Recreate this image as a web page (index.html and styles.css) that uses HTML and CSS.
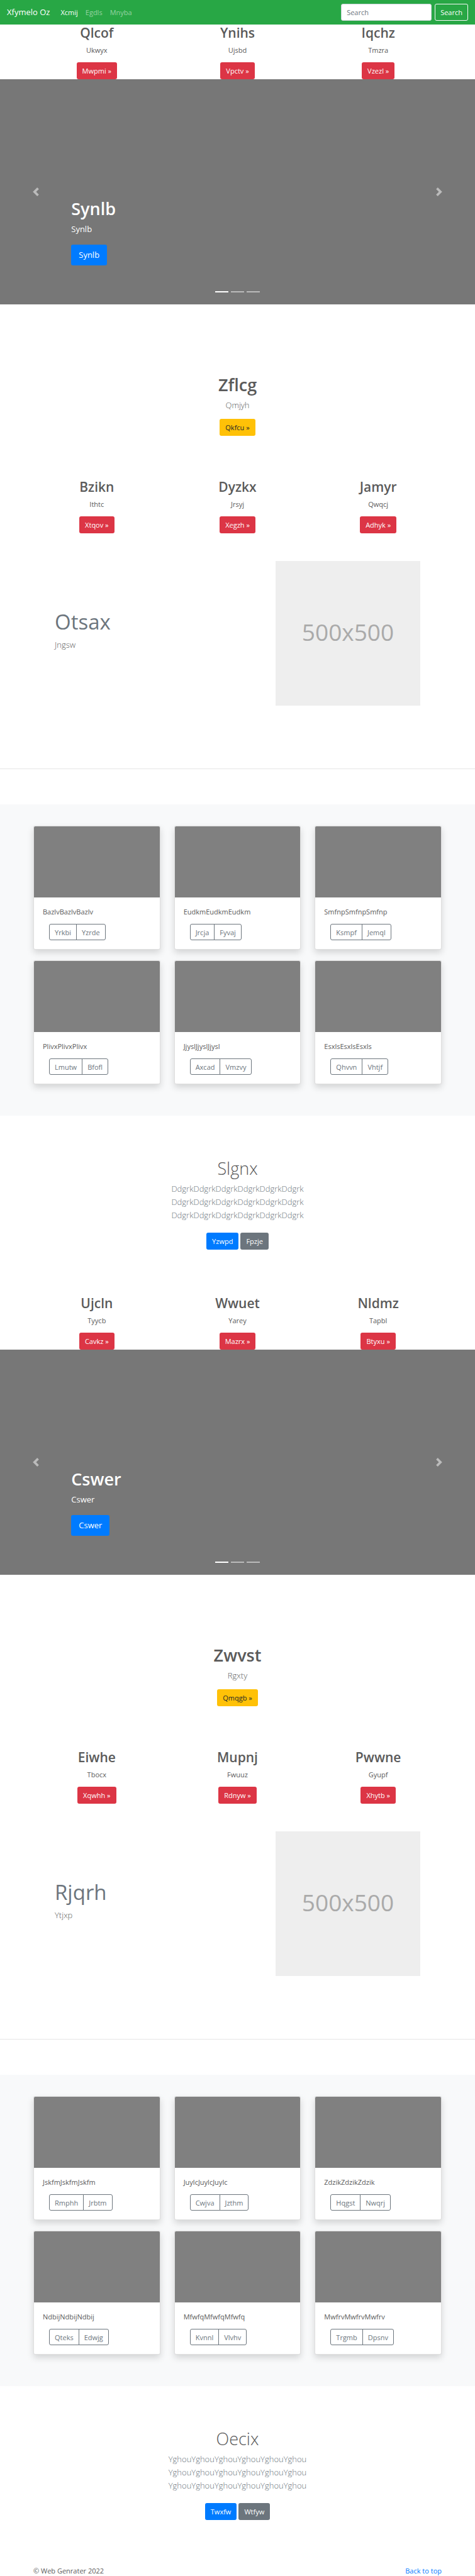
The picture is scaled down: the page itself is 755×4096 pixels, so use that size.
FILE: index.html
```html
<!DOCTYPE html>
<html lang="en">
<head>
<meta charset="utf-8">
<meta name="viewport" content="width=device-width, initial-scale=1">
<title>Xfymelo Oz</title>
<link rel="stylesheet" href="styles.css">
</head>
<body>
<header class="navbar" id="top">
  <a class="brand" href="#">Xfymelo Oz</a>
  <nav class="nav">
    <a class="nav-link active" href="#">Xcmij</a>
    <a class="nav-link" href="#">Egdls</a>
    <a class="nav-link" href="#">Mnyba</a>
  </nav>
  <form class="search">
    <input class="search-input" type="search" placeholder="Search" aria-label="Search">
    <button class="btn btn-outline-light" type="button">Search</button>
  </form>
</header>

<main>
  <section class="container columns">
    <div class="column"><h2>Qlcof</h2><p>Ukwyx</p><a class="btn btn-danger" href="#">Mwpmi »</a></div>
    <div class="column"><h2>Ynihs</h2><p>Ujsbd</p><a class="btn btn-danger" href="#">Vpctv »</a></div>
    <div class="column"><h2>Iqchz</h2><p>Tmzra</p><a class="btn btn-danger" href="#">Vzezl »</a></div>
  </section>

  <section class="carousel">
    <div class="caption"><h1>Synlb</h1><p>Synlb</p><a class="btn btn-primary btn-lg" href="#">Synlb</a></div>
    <button class="control prev" type="button" aria-label="Previous"><svg viewBox="0 0 8 8"><path d="M5.25 0l-4 4 4 4 1.5-1.5-2.5-2.5 2.5-2.5-1.5-1.5z"/></svg></button>
    <button class="control next" type="button" aria-label="Next"><svg viewBox="0 0 8 8"><path d="M2.75 0l-1.5 1.5 2.5 2.5-2.5 2.5 1.5 1.5 4-4-4-4z"/></svg></button>
    <div class="indicators"><span class="indicator current"></span><span class="indicator"></span><span class="indicator"></span></div>
  </section>

  <section class="container intro">
    <h1>Zflcg</h1><p class="lead">Qmjyh</p><a class="btn btn-warning" href="#">Qkfcu »</a>
  </section>

  <section class="container columns">
    <div class="column"><h2>Bzikn</h2><p>Ithtc</p><a class="btn btn-danger" href="#">Xtqov »</a></div>
    <div class="column"><h2>Dyzkx</h2><p>Jrsyj</p><a class="btn btn-danger" href="#">Xegzh »</a></div>
    <div class="column"><h2>Jamyr</h2><p>Qwqcj</p><a class="btn btn-danger" href="#">Adhyk »</a></div>
  </section>

  <section class="container featurette">
    <div class="feature-text"><h2>Otsax</h2><p class="lead">Jngsw</p></div>
    <div class="placeholder">500x500</div>
  </section>
  <hr class="divider">

  <section class="album">
    <div class="container cards">
      <article class="card"><div class="thumb"></div><div class="card-body"><p>BazlvBazlvBazlv</p><div class="btn-group"><button class="btn btn-outline" type="button">Yrkbi</button><button class="btn btn-outline" type="button">Yzrde</button></div></div></article>
      <article class="card"><div class="thumb"></div><div class="card-body"><p>EudkmEudkmEudkm</p><div class="btn-group"><button class="btn btn-outline" type="button">Jrcja</button><button class="btn btn-outline" type="button">Fyvaj</button></div></div></article>
      <article class="card"><div class="thumb"></div><div class="card-body"><p>SmfnpSmfnpSmfnp</p><div class="btn-group"><button class="btn btn-outline" type="button">Ksmpf</button><button class="btn btn-outline" type="button">Jemql</button></div></div></article>
      <article class="card"><div class="thumb"></div><div class="card-body"><p>PlivxPlivxPlivx</p><div class="btn-group"><button class="btn btn-outline" type="button">Lmutw</button><button class="btn btn-outline" type="button">Bfofl</button></div></div></article>
      <article class="card"><div class="thumb"></div><div class="card-body"><p>JjyslJjyslJjysl</p><div class="btn-group"><button class="btn btn-outline" type="button">Axcad</button><button class="btn btn-outline" type="button">Vmzvy</button></div></div></article>
      <article class="card"><div class="thumb"></div><div class="card-body"><p>EsxlsEsxlsEsxls</p><div class="btn-group"><button class="btn btn-outline" type="button">Qhvvn</button><button class="btn btn-outline" type="button">Vhtjf</button></div></div></article>
    </div>
  </section>

  <section class="container jumbotron">
    <h1>Slgnx</h1>
    <p class="lead">DdgrkDdgrkDdgrkDdgrkDdgrkDdgrk<br>DdgrkDdgrkDdgrkDdgrkDdgrkDdgrk<br>DdgrkDdgrkDdgrkDdgrkDdgrkDdgrk</p>
    <div class="actions"><a class="btn btn-primary" href="#">Yzwpd</a><a class="btn btn-secondary" href="#">Fpzje</a></div>
  </section>

  <section class="container columns">
    <div class="column"><h2>Ujcln</h2><p>Tyycb</p><a class="btn btn-danger" href="#">Cavkz »</a></div>
    <div class="column"><h2>Wwuet</h2><p>Yarey</p><a class="btn btn-danger" href="#">Mazrx »</a></div>
    <div class="column"><h2>Nldmz</h2><p>Tapbl</p><a class="btn btn-danger" href="#">Btyxu »</a></div>
  </section>

  <section class="carousel">
    <div class="caption"><h1>Cswer</h1><p>Cswer</p><a class="btn btn-primary btn-lg" href="#">Cswer</a></div>
    <button class="control prev" type="button" aria-label="Previous"><svg viewBox="0 0 8 8"><path d="M5.25 0l-4 4 4 4 1.5-1.5-2.5-2.5 2.5-2.5-1.5-1.5z"/></svg></button>
    <button class="control next" type="button" aria-label="Next"><svg viewBox="0 0 8 8"><path d="M2.75 0l-1.5 1.5 2.5 2.5-2.5 2.5 1.5 1.5 4-4-4-4z"/></svg></button>
    <div class="indicators"><span class="indicator current"></span><span class="indicator"></span><span class="indicator"></span></div>
  </section>

  <section class="container intro">
    <h1>Zwvst</h1><p class="lead">Rgxty</p><a class="btn btn-warning" href="#">Qmqgb »</a>
  </section>

  <section class="container columns">
    <div class="column"><h2>Eiwhe</h2><p>Tbocx</p><a class="btn btn-danger" href="#">Xqwhh »</a></div>
    <div class="column"><h2>Mupnj</h2><p>Fwuuz</p><a class="btn btn-danger" href="#">Rdnyw »</a></div>
    <div class="column"><h2>Pwwne</h2><p>Gyupf</p><a class="btn btn-danger" href="#">Xhytb »</a></div>
  </section>

  <section class="container featurette">
    <div class="feature-text"><h2>Rjqrh</h2><p class="lead">Ytjxp</p></div>
    <div class="placeholder">500x500</div>
  </section>
  <hr class="divider">

  <section class="album">
    <div class="container cards">
      <article class="card"><div class="thumb"></div><div class="card-body"><p>JskfmJskfmJskfm</p><div class="btn-group"><button class="btn btn-outline" type="button">Rmphh</button><button class="btn btn-outline" type="button">Jrbtm</button></div></div></article>
      <article class="card"><div class="thumb"></div><div class="card-body"><p>JuylcJuylcJuylc</p><div class="btn-group"><button class="btn btn-outline" type="button">Cwjva</button><button class="btn btn-outline" type="button">Jzthm</button></div></div></article>
      <article class="card"><div class="thumb"></div><div class="card-body"><p>ZdzikZdzikZdzik</p><div class="btn-group"><button class="btn btn-outline" type="button">Hqgst</button><button class="btn btn-outline" type="button">Nwqrj</button></div></div></article>
      <article class="card"><div class="thumb"></div><div class="card-body"><p>NdbijNdbijNdbij</p><div class="btn-group"><button class="btn btn-outline" type="button">Qteks</button><button class="btn btn-outline" type="button">Edwjg</button></div></div></article>
      <article class="card"><div class="thumb"></div><div class="card-body"><p>MfwfqMfwfqMfwfq</p><div class="btn-group"><button class="btn btn-outline" type="button">Kvnnl</button><button class="btn btn-outline" type="button">Vlvhv</button></div></div></article>
      <article class="card"><div class="thumb"></div><div class="card-body"><p>MwfrvMwfrvMwfrv</p><div class="btn-group"><button class="btn btn-outline" type="button">Trgmb</button><button class="btn btn-outline" type="button">Dpsnv</button></div></div></article>
    </div>
  </section>

  <section class="container jumbotron">
    <h1>Oecix</h1>
    <p class="lead">YghouYghouYghouYghouYghouYghou<br>YghouYghouYghouYghouYghouYghou<br>YghouYghouYghouYghouYghouYghou</p>
    <div class="actions"><a class="btn btn-primary" href="#">Twxfw</a><a class="btn btn-secondary" href="#">Wtfyw</a></div>
  </section>
</main>

<footer class="container footer">
  <p>© Web Genrater 2022</p>
  <a href="#top">Back to top</a>
</footer>
</body>
</html>
```

FILE: styles.css
```css
* { box-sizing: border-box; }

body {
  margin: 0;
  background: #fff;
  color: #5a5a5a;
  font-family: "Open Sans", "Noto Sans", sans-serif;
  font-size: 11px;
  line-height: 17px;
}

h1, h2, p { margin: 0; }
a { color: #007bff; text-decoration: none; }

h1 { margin-bottom: 5px; font-size: 27px; line-height: 34px; font-weight: 600; }
h2 { margin-bottom: 5px; font-size: 21px; line-height: 27px; font-weight: 600; }
.lead { font-size: 13px; line-height: 21px; font-weight: 300; }

.container {
  width: 100%;
  max-width: 671px;
  margin: 0 auto;
  padding: 0 11px;
}

/* Buttons */
.btn {
  display: inline-block;
  height: 27px;
  padding: 4px 8px;
  border: 1px solid transparent;
  border-radius: 3px;
  color: #fff;
  font: inherit;
  line-height: 17px;
  white-space: nowrap;
  cursor: pointer;
}
.btn-lg { height: 33px; padding: 5px 11px; font-size: 13px; line-height: 21px; }
.btn-primary { background: #007bff; }
.btn-secondary { background: #6c757d; }
.btn-danger { background: #dc3545; }
.btn-warning { background: #ffc107; color: #212529; }
.btn-outline-light { background: transparent; border-color: #f8f9fa; }

/* Top bar */
.navbar {
  display: flex;
  align-items: center;
  height: 39px;
  padding: 0 11px;
  background: #28a745;
}
.brand { margin-right: 11px; color: #fff; font-size: 13px; line-height: 21px; }
.nav { display: flex; flex: 1; }
.nav-link { padding: 6px; color: rgba(255, 255, 255, .5); }
.nav-link.active { color: #fff; }
.search { display: flex; gap: 5px; }
.search-input {
  width: 144px;
  height: 27px;
  padding: 4px 8px;
  border: 1px solid #ced4da;
  border-radius: 3px;
  background: #fff;
  color: #495057;
  font: inherit;
}
.search-input::placeholder { color: #6c757d; opacity: 1; }

/* Three text columns */
.columns { display: grid; grid-template-columns: repeat(3, 1fr); gap: 22px; text-align: center; }
.column { display: flex; flex-direction: column; align-items: center; }
.column p { margin-bottom: 11px; }

/* Carousel */
.carousel {
  position: relative;
  display: flex;
  align-items: flex-end;
  height: 358px;
  padding: 0 15% 62px;
  background: #777;
  color: #fff;
}
.caption { display: flex; flex-direction: column; align-items: flex-start; }
.caption p { margin-bottom: 14px; font-size: 13px; line-height: 21px; }
.control {
  position: absolute;
  top: 0;
  bottom: 0;
  display: flex;
  align-items: center;
  justify-content: center;
  width: 15%;
  padding: 0;
  border: 0;
  background: none;
  opacity: .5;
  cursor: pointer;
}
.control svg { width: 14px; height: 14px; fill: #fff; }
.prev { left: 0; }
.next { right: 0; }
.indicators {
  position: absolute;
  right: 0;
  bottom: 19px;
  left: 0;
  display: flex;
  justify-content: center;
  gap: 4px;
}
.indicator { width: 21px; height: 2px; background: #fff; opacity: .5; }
.indicator.current { opacity: 1; }

/* Centered intro */
.intro {
  display: flex;
  flex-direction: column;
  align-items: center;
  padding-top: 111px;
  padding-bottom: 68px;
}
.intro .lead { margin-bottom: 11px; }

/* Featurette */
.featurette {
  display: grid;
  grid-template-columns: 7fr 5fr;
  align-items: center;
  padding: 44px 45px 100px;
}
.feature-text h2 { font-size: 33px; line-height: 42px; font-weight: 400; color: #6c757d; }
.feature-text .lead { margin-bottom: 11px; }
.placeholder {
  display: flex;
  align-items: center;
  justify-content: center;
  width: 230px;
  aspect-ratio: 1;
  justify-self: end;
  padding-bottom: 4px;
  background: #eee;
  color: #aaa;
  font-size: 37px;
  line-height: 44px;
}
.divider { margin: 0 0 56px; border: 0; border-top: 1px solid rgba(0, 0, 0, .1); }

/* Album */
.album { padding: 34px 0 50px; background: #f8f9fa; }
.cards { display: grid; grid-template-columns: repeat(3, 1fr); gap: 17px 22px; }
.card {
  overflow: hidden;
  border: 1px solid rgba(0, 0, 0, .125);
  border-radius: 3px;
  background: #fff;
  box-shadow: 0 5px 11px rgba(0, 0, 0, .15);
}
.thumb { height: 113px; background: #808080; }
.card-body { padding: 14px; }
.card-body p { margin-bottom: 11px; }
.btn-group { display: flex; padding-left: 10px; }
.btn-outline {
  height: 26px;
  padding: 3px 8px;
  border-color: #6c757d;
  background: transparent;
  color: #6c757d;
}
.btn-outline:first-child { border-radius: 3px 0 0 3px; }
.btn-outline:last-child { margin-left: -1px; border-radius: 0 3px 3px 0; }

/* Call to action */
.jumbotron { padding-top: 67px; padding-bottom: 72px; text-align: center; }
.jumbotron h1 { font-weight: 300; }
.jumbotron .lead { margin-bottom: 17px; color: #6c757d; }
.actions { display: flex; justify-content: center; gap: 3px; }

.footer { display: flex; justify-content: space-between; }
```
